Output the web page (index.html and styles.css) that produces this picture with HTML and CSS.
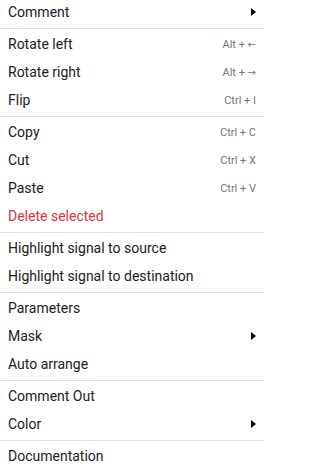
FILE: index.html
```html
<!DOCTYPE html>
<html>
<head>
<meta charset="utf-8">
<link rel="stylesheet" href="styles.css">
</head>
<body>
<div class="menu">
  <div class="item"><span>Comment</span><span class="sub"></span></div>
  <div class="divider"></div>
  <div class="item"><span>Rotate left</span><span class="key">Alt + <span class="arrow">←</span></span></div>
  <div class="item"><span>Rotate right</span><span class="key">Alt + <span class="arrow">→</span></span></div>
  <div class="item"><span>Flip</span><span class="key">Ctrl + I</span></div>
  <div class="divider"></div>
  <div class="item"><span>Copy</span><span class="key">Ctrl + C</span></div>
  <div class="item"><span>Cut</span><span class="key">Ctrl + X</span></div>
  <div class="item"><span>Paste</span><span class="key">Ctrl + V</span></div>
  <div class="item danger"><span>Delete selected</span></div>
  <div class="divider"></div>
  <div class="item"><span>Highlight signal to source</span></div>
  <div class="item"><span>Highlight signal to destination</span></div>
  <div class="divider"></div>
  <div class="item"><span>Parameters</span></div>
  <div class="item"><span>Mask</span><span class="sub"></span></div>
  <div class="item"><span>Auto arrange</span></div>
  <div class="divider"></div>
  <div class="item"><span>Comment Out</span></div>
  <div class="item"><span>Color</span><span class="sub"></span></div>
  <div class="divider"></div>
  <div class="item"><span>Documentation</span></div>
</div>
</body>
</html>
```
FILE: styles.css
```css
html, body {
  margin: 0;
  padding: 0;
  background: #fff;
}
.menu {
  width: 264px;
  margin-top: -2px;
  font-family: Roboto, "Liberation Sans", sans-serif;
  font-size: 14px;
  color: #212121;
}
.item {
  height: 28px;
  display: flex;
  align-items: center;
  justify-content: space-between;
  padding: 0 8px;
}
.danger {
  color: #dc3545;
}
.key {
  font-size: 11px;
  color: #757575;
}
.arrow {
  font-family: "DejaVu Sans", sans-serif;
  font-size: 10px;
}
.sub {
  width: 0;
  height: 0;
  border-top: 4px solid transparent;
  border-bottom: 4px solid transparent;
  border-left: 5px solid #000;
}
.divider {
  height: 1px;
  background: #e0e0e0;
  margin: 2px 0 1px;
}
```
